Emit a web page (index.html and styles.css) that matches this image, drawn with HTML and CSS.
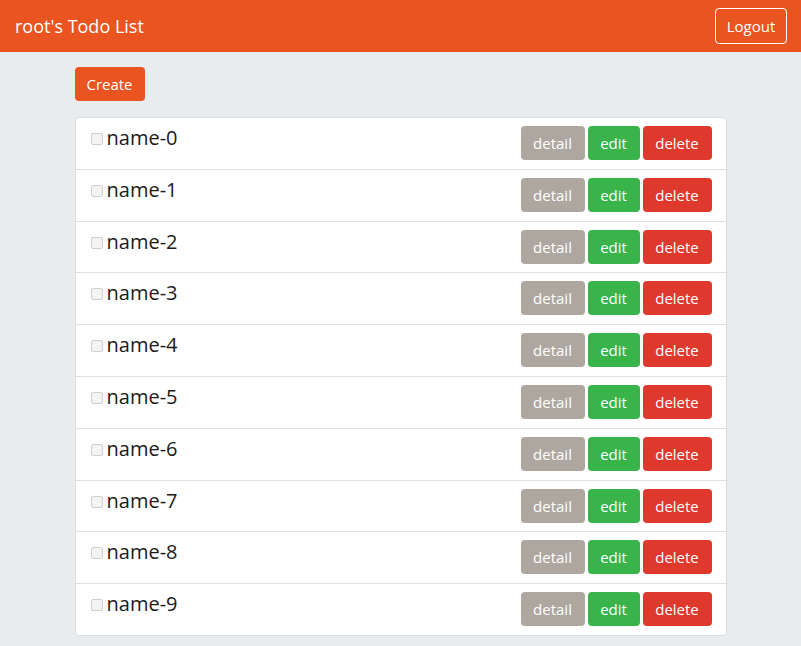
FILE: index.html
```html
<!DOCTYPE html>
<html>
<head>
<meta charset="utf-8">
<link rel="stylesheet" href="styles.css">
</head>
<body>
<nav class="navbar">
  <span class="brand">root's Todo List</span>
  <button class="logout">Logout</button>
</nav>
<main class="container">
  <button class="btn btn-primary">Create</button>
  <ul class="list">
    <li class="item"><label class="name"><input type="checkbox" class="check">name-0</label><div class="actions"><button class="btn btn-detail">detail</button><button class="btn btn-edit">edit</button><button class="btn btn-delete">delete</button></div></li>
    <li class="item"><label class="name"><input type="checkbox" class="check">name-1</label><div class="actions"><button class="btn btn-detail">detail</button><button class="btn btn-edit">edit</button><button class="btn btn-delete">delete</button></div></li>
    <li class="item"><label class="name"><input type="checkbox" class="check">name-2</label><div class="actions"><button class="btn btn-detail">detail</button><button class="btn btn-edit">edit</button><button class="btn btn-delete">delete</button></div></li>
    <li class="item"><label class="name"><input type="checkbox" class="check">name-3</label><div class="actions"><button class="btn btn-detail">detail</button><button class="btn btn-edit">edit</button><button class="btn btn-delete">delete</button></div></li>
    <li class="item"><label class="name"><input type="checkbox" class="check">name-4</label><div class="actions"><button class="btn btn-detail">detail</button><button class="btn btn-edit">edit</button><button class="btn btn-delete">delete</button></div></li>
    <li class="item"><label class="name"><input type="checkbox" class="check">name-5</label><div class="actions"><button class="btn btn-detail">detail</button><button class="btn btn-edit">edit</button><button class="btn btn-delete">delete</button></div></li>
    <li class="item"><label class="name"><input type="checkbox" class="check">name-6</label><div class="actions"><button class="btn btn-detail">detail</button><button class="btn btn-edit">edit</button><button class="btn btn-delete">delete</button></div></li>
    <li class="item"><label class="name"><input type="checkbox" class="check">name-7</label><div class="actions"><button class="btn btn-detail">detail</button><button class="btn btn-edit">edit</button><button class="btn btn-delete">delete</button></div></li>
    <li class="item"><label class="name"><input type="checkbox" class="check">name-8</label><div class="actions"><button class="btn btn-detail">detail</button><button class="btn btn-edit">edit</button><button class="btn btn-delete">delete</button></div></li>
    <li class="item"><label class="name"><input type="checkbox" class="check">name-9</label><div class="actions"><button class="btn btn-detail">detail</button><button class="btn btn-edit">edit</button><button class="btn btn-delete">delete</button></div></li>
  </ul>
</main>
</body>
</html>
```
FILE: styles.css
```css
* { box-sizing: border-box; }
html, body { margin: 0; padding: 0; }
body {
  background: #e9ecef;
  font-family: "Open Sans", "Noto Sans", sans-serif;
  color: #222;
}
.navbar {
  height: 52px;
  background: #e95420;
  display: flex;
  align-items: center;
  justify-content: space-between;
  padding: 0 14px 0 15px;
}
.brand {
  color: #fff;
  font-size: 18px;
  line-height: 24px;
}
.logout {
  width: 72px;
  height: 36px;
  background: transparent;
  border: 1px solid #fff;
  border-radius: 4px;
  color: #fff;
  font-family: inherit;
  font-size: 15px;
  padding: 0;
  margin-top: -1px;
}
.container {
  width: 652px;
  margin: 15px auto 0;
  padding-left: 1px;
}
.btn {
  height: 34px;
  border: none;
  border-radius: 4px;
  color: #fff;
  font-family: inherit;
  font-size: 15px;
  padding: 0 12px;
  line-height: 34px;
  display: inline-block;
}
.container > .btn-primary { margin-left: -1px; }
.btn-primary { background: #e95420; width: 70px; padding: 0; }
.list {
  list-style: none;
  margin: 16px 0 0 -1px;
  padding: 0;
  background: #fff;
  border: 1px solid #dcdcdc;
  border-radius: 4px;
}
.item {
  height: 51.8px;
  padding: 8px 14px 0 15px;
  display: flex;
  justify-content: space-between;
  align-items: flex-start;
  border-top: 1px solid #dfdfdf;
}
.item:first-child { border-top: none; height: 50.8px; }
.name {
  display: flex;
  align-items: flex-start;
  font-size: 20px;
  line-height: 24px;
  color: #1a1a1a;
}
.check {
  appearance: none;
  -webkit-appearance: none;
  width: 12px;
  height: 12px;
  margin: 7px 4px 0 0;
  border: 1px solid #cfcfcf;
  border-radius: 2px;
  background: #f3f3f3;
}
.actions {
  display: flex;
  gap: 3px;
}
.btn-detail { background: #aea79f; width: 64px; padding: 0; }
.btn-edit { background: #38b44a; width: 52px; padding: 0; }
.btn-delete { background: #df382c; width: 69px; padding: 0; }
```
